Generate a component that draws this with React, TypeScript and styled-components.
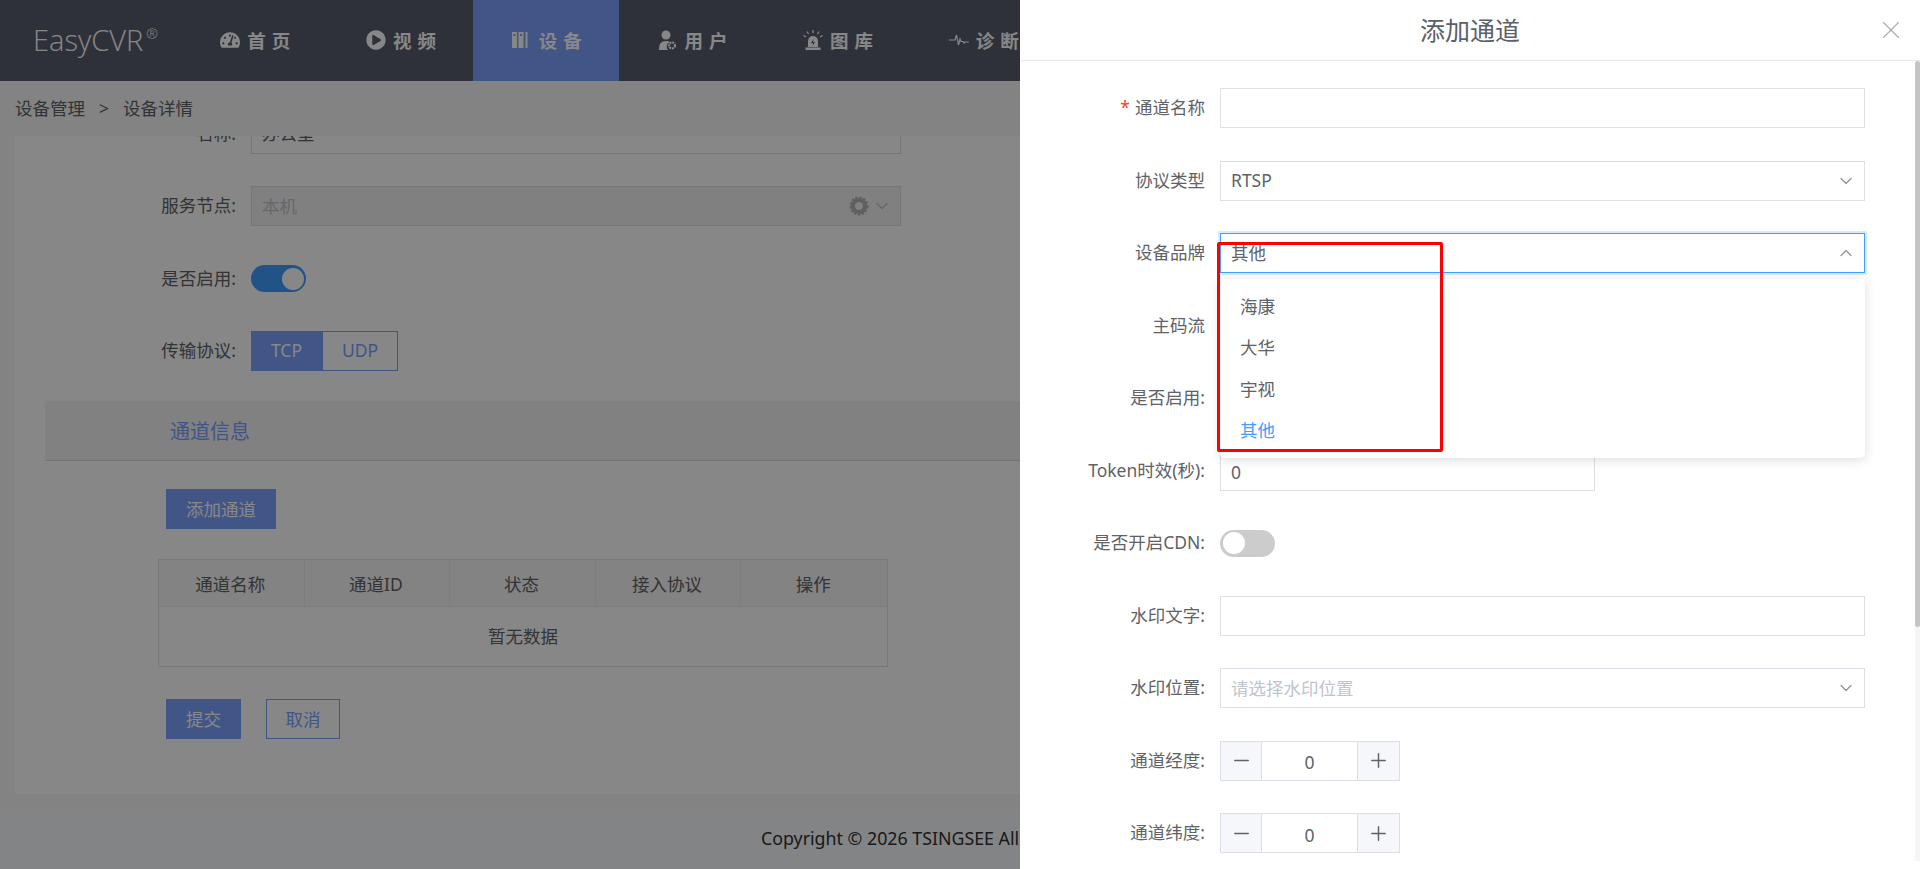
import styled, { createGlobalStyle } from "styled-components";
import { ChevronDown, ChevronUp, Minus, Plus, X } from "lucide-react";
import { FaPlayCircle, FaTachometerAlt } from "react-icons/fa";

const GlobalStyle = createGlobalStyle`
    html, body {
        margin: 0;
        height: 100%;
        overflow: hidden;
    }
    body {
        font-family: "Noto Sans", "Noto Sans CJK SC", sans-serif;
        font-size: 17.5px;
        color: #606266;
    }
    * {
        box-sizing: border-box;
    }
`;

const Page = styled.div`
    height: 869px;
    display: flex;
    flex-direction: column;
    background: #f7f7f7;
`;

const Header = styled.header`
    height: 81px;
    flex: none;
    display: flex;
    background: #595e6f;
`;

const Logo = styled.div`
    width: 182px;
    padding: 21px 0 0 33px;
    font-size: 29px;
    line-height: 38px;
    color: #fff;
    font-family: "Open Sans", sans-serif;
    font-weight: 300;
    white-space: nowrap;

    sup {
        font-size: 14px;
        line-height: 0;
        vertical-align: 12px;
        margin-left: 3px;
    }
`;

const NavItem = styled.div<{ $active?: boolean }>`
    width: 145.7px;
    flex: none;
    display: flex;
    align-items: center;
    justify-content: center;
    gap: 7px;
    padding: 0 0 2px 7px;
    color: #fff;
    background: ${(p) => (p.$active ? "#7da0ff" : "transparent")};
    font-weight: 700;
    font-size: 18.5px;
    letter-spacing: 6px;

    svg {
        flex: none;
    }
`;

const Breadcrumb = styled.div`
    height: 55px;
    flex: none;
    display: flex;
    align-items: center;
    padding: 0 0 2px 15px;
    gap: 14px;
    color: #606266;
`;

const Body = styled.main`
    flex: 1;
    min-height: 0;
    padding: 0 15px 13px;
`;

const Card = styled.div`
    height: 100%;
    background: #fff;
    overflow: hidden;
`;

// the form is scrolled a little in the reference
const Scrolled = styled.div`
    margin-top: -22.5px;
`;

const FormRow = styled.div<{ $labelWidth: number }>`
    display: flex;
    height: 40px;
    margin-bottom: 32.5px;

    > label {
        width: ${(p) => p.$labelWidth}px;
    }
`;

const Label = styled.label<{ $required?: boolean }>`
    flex: none;
    padding-right: 15px;
    text-align: right;
    line-height: 38px;
    white-space: nowrap;
    color: #606266;

    ${(p) =>
        p.$required &&
        `&::before {
            content: "*";
            color: #f5402c;
            margin-right: 5px;
        }`}
`;

const Field = styled.div<{ $width: number; $focused?: boolean; $disabled?: boolean }>`
    position: relative;
    width: ${(p) => p.$width}px;
    height: 40px;
    display: flex;
    align-items: center;
    padding: 0 12px 2px 10px;
    background: ${(p) => (p.$disabled ? "#f1f1f1" : "#fff")};
    border: 1px solid ${(p) => (p.$focused ? "#409eff" : "#dcdfe6")};
    box-shadow: ${(p) => (p.$focused ? "0 0 0 2px rgba(64, 158, 255, 0.2)" : "none")};
    color: #606266;
`;

const NumberField = styled(Field)`
    padding: 2px 12px 0 10px;
`;

const Placeholder = styled.span`
    color: #c0c4cc;
`;

const FieldIcons = styled.span<{ $muted?: boolean }>`
    display: flex;
    align-items: center;
    gap: 2px;
    margin: 2px -4px 0 auto;
    color: ${(p) => (p.$muted ? "#c0c4cc" : "#909399")};
`;

const Switch = styled.div<{ $on?: boolean }>`
    width: 55px;
    height: 27px;
    margin-top: 6.5px;
    padding: 2.5px;
    border-radius: 14px;
    display: flex;
    justify-content: ${(p) => (p.$on ? "flex-end" : "flex-start")};
    background: ${(p) => (p.$on ? "#409eff" : "#ccc")};

    &::after {
        content: "";
        width: 22px;
        height: 22px;
        border-radius: 50%;
        background: #fff;
    }
`;

const Segments = styled.div`
    display: flex;
    height: 40px;
`;

const Segment = styled.div<{ $active?: boolean }>`
    width: ${(p) => (p.$active ? "71px" : "76px")};
    display: flex;
    align-items: center;
    justify-content: center;
    padding-bottom: 2px;
    border: 1px solid #7da0ff;
    color: ${(p) => (p.$active ? "#fff" : "#7da0ff")};
    background: ${(p) => (p.$active ? "#7da0ff" : "#fff")};
`;

const SectionBar = styled.div`
    margin: -2.5px 0 0 30px;
    height: 60px;
    display: flex;
    align-items: center;
    padding-left: 125px;
    background: #f3f3f3;
    border-bottom: 1px solid #dcdcdc;
    color: #7da0ff;
    font-size: 20px;
`;

const Button = styled.div<{ $outline?: boolean; $width: number }>`
    width: ${(p) => p.$width}px;
    height: 40px;
    display: flex;
    align-items: center;
    justify-content: center;
    padding-bottom: 2px;
    border: 1px solid #7da0ff;
    color: ${(p) => (p.$outline ? "#7da0ff" : "#fff")};
    background: ${(p) => (p.$outline ? "#fff" : "#7da0ff")};
`;

const AddButton = styled(Button)`
    margin: 28px 0 30px 151px;
`;

const Table = styled.div`
    margin-left: 143px;
    width: 730px;
    height: 108px;
    border: 1px solid #e4e4e4;
`;

const TableHead = styled.div`
    height: 47px;
    display: grid;
    grid-template-columns: repeat(5, 1fr);
    background: #f7f7f7;
    border-bottom: 1px solid #ebebeb;
`;

const HeadCell = styled.div`
    display: flex;
    align-items: center;
    justify-content: center;
    padding-right: 2px;
    border-right: 1px solid #ededed;

    &:last-child {
        border-right: none;
    }
`;

const EmptyRow = styled.div`
    height: 58px;
    display: flex;
    align-items: center;
    justify-content: center;
    padding-bottom: 2px;
`;

const Actions = styled.div`
    display: flex;
    gap: 25px;
    margin: 32px 0 0 151px;
`;

const Footer = styled.footer`
    height: 62px;
    flex: none;
    display: flex;
    align-items: center;
    padding-left: 761px;
    background: #f7fafc;
    color: #303133;
    font-size: 17.8px;
    white-space: nowrap;
`;

const Mask = styled.div`
    position: fixed;
    inset: 0;
    background: rgba(0, 0, 0, 0.47);
`;

const Drawer = styled.aside`
    position: fixed;
    top: 0;
    right: 0;
    bottom: 0;
    width: 900px;
    background: #fff;
    overflow: hidden;
`;

const DrawerHeader = styled.div`
    position: relative;
    height: 61px;
    display: flex;
    align-items: center;
    justify-content: center;
    padding-bottom: 2px;
    border-bottom: 1px solid #e8e8e8;
    font-size: 25px;
    color: #5b6069;
`;

const CloseIcon = styled(X)`
    position: absolute;
    top: 15px;
    right: 14px;
    color: #a6a9ad;
`;

const DrawerBody = styled.div`
    padding-top: 27px;
`;

const Dropdown = styled.div`
    position: absolute;
    top: 279px;
    left: 200px;
    width: 645px;
    height: 179px;
    padding: 7px 0;
    background: #fff;
    border-radius: 5px;
    box-shadow: 0 2px 12px rgba(0, 0, 0, 0.14);
`;

const Option = styled.div<{ $selected?: boolean }>`
    height: 41.4px;
    line-height: 41.4px;
    padding-left: 20px;
    color: ${(p) => (p.$selected ? "#409eff" : "#606266")};
`;

const Highlight = styled.div`
    position: absolute;
    top: 242px;
    left: 197px;
    width: 226px;
    height: 210px;
    border: 3px solid #f00;
    border-radius: 2px;
    pointer-events: none;
`;

const ScrollTrack = styled.div`
    position: absolute;
    top: 61px;
    right: 0;
    width: 5px;
    height: 800px;
    background: #f6f6f6;
`;

const ScrollThumb = styled.div`
    height: 566px;
    background: #c4c4c4;
    border-radius: 3px;
`;

const Stepper = styled.div`
    width: 180px;
    height: 40px;
    display: grid;
    grid-template-columns: 40px 1fr 41px;
    border: 1px solid #dcdfe6;
`;

const StepButton = styled.div`
    display: flex;
    align-items: center;
    justify-content: center;
    background: #f5f7fa;
    color: #606266;
`;

const StepValue = styled.div`
    display: flex;
    align-items: center;
    justify-content: center;
    padding-top: 3px;
    border-left: 1px solid #dcdfe6;
    border-right: 1px solid #dcdfe6;
`;

const DeviceIcon = () => (
    <svg width="20" height="20" viewBox="0 0 20 20" fill="currentColor">
        <rect x="0" y="2" width="5" height="16" />
        <rect x="6.5" y="2" width="5" height="16" />
        <rect x="13.5" y="2" width="2" height="16" />
        <rect x="1.5" y="4" width="2" height="2" fill="#7da0ff" />
        <rect x="8" y="4" width="2" height="2" fill="#7da0ff" />
    </svg>
);

const UserGearIcon = () => (
    <svg width="20" height="20" viewBox="0 0 20 20" fill="currentColor">
        <circle cx="9" cy="5" r="4.5" />
        <path d="M2 20c0-6 2-9 7-9 1.6 0 2.8.3 3.7 1A5 5 0 0 0 11 20z" />
        <circle cx="15" cy="15.5" r="3" fill="none" stroke="currentColor" strokeWidth="2.2" strokeDasharray="2 0.8" />
    </svg>
);

const AlarmIcon = () => (
    <svg width="20" height="20" viewBox="0 0 20 20" fill="currentColor">
        <path d="M5 17v-6a5 5 0 0 1 10 0v6z" />
        <rect x="2.5" y="17.5" width="15" height="2.5" />
        <path d="M10.5 9 8 13h2l-.5 3L12 12h-2z" fill="#595e6f" />
        <path d="M10 0v3M4 1.5 5.5 4M16 1.5 14.5 4M0.5 5.5 3 7M19.5 5.5 17 7" stroke="currentColor" strokeWidth="1.3" fill="none" />
    </svg>
);

const PulseIcon = () => (
    <svg width="20" height="20" viewBox="0 0 20 20" fill="none" stroke="currentColor" strokeWidth="1.2">
        <path d="M0 10h6l1.5-5 2 10 1.5-6 1 2.5h2l1 1.5 1-1h4" />
    </svg>
);

const NAV_ITEMS = [
    { text: "首页", icon: <FaTachometerAlt size={20} /> },
    { text: "视频", icon: <FaPlayCircle size={20} /> },
    { text: "设备", icon: <DeviceIcon />, active: true },
    { text: "用户", icon: <UserGearIcon /> },
    { text: "图库", icon: <AlarmIcon /> },
    { text: "诊断", icon: <PulseIcon /> }
];

const TABLE_COLUMNS = ["通道名称", "通道ID", "状态", "接入协议", "操作"];

const BRANDS = ["海康", "大华", "宇视", "其他"];

const GearIcon = () => (
    <svg width="22" height="22" viewBox="0 0 22 22" fill="none" stroke="#b4b4b4" strokeWidth="4">
        <circle cx="11" cy="11" r="6" />
        <circle cx="11" cy="11" r="8.5" strokeWidth="2" strokeDasharray="2.5 1.5" />
    </svg>
);

const Stepped = () => (
    <Stepper>
        <StepButton>
            <Minus size={23} strokeWidth={1.5} />
        </StepButton>
        <StepValue>0</StepValue>
        <StepButton>
            <Plus size={23} strokeWidth={1.5} />
        </StepButton>
    </Stepper>
);

const App = () => {
    return (
        <>
            <GlobalStyle />
            <Page>
                <Header>
                    <Logo>
                        EasyCVR<sup>®</sup>
                    </Logo>
                    {NAV_ITEMS.map((item) => (
                        <NavItem key={item.text} $active={item.active}>
                            {item.icon}
                            <span>{item.text}</span>
                        </NavItem>
                    ))}
                </Header>
                <Breadcrumb>
                    <span>设备管理</span>
                    <span>&gt;</span>
                    <span>设备详情</span>
                </Breadcrumb>
                <Body>
                    <Card>
                        <Scrolled>
                            <FormRow $labelWidth={236}>
                                <Label $required>名称:</Label>
                                <Field $width={650}>办公室</Field>
                            </FormRow>
                            <FormRow $labelWidth={236}>
                                <Label>服务节点:</Label>
                                <Field $width={650} $disabled>
                                    <Placeholder>本机</Placeholder>
                                    <FieldIcons $muted>
                                        <GearIcon />
                                        <ChevronDown size={20} strokeWidth={1.5} />
                                    </FieldIcons>
                                </Field>
                            </FormRow>
                            <FormRow $labelWidth={236}>
                                <Label>是否启用:</Label>
                                <Switch $on />
                            </FormRow>
                            <FormRow $labelWidth={236}>
                                <Label>传输协议:</Label>
                                <Segments>
                                    <Segment $active>TCP</Segment>
                                    <Segment>UDP</Segment>
                                </Segments>
                            </FormRow>
                            <SectionBar>通道信息</SectionBar>
                            <AddButton $width={110}>添加通道</AddButton>
                            <Table>
                                <TableHead>
                                    {TABLE_COLUMNS.map((column) => (
                                        <HeadCell key={column}>{column}</HeadCell>
                                    ))}
                                </TableHead>
                                <EmptyRow>暂无数据</EmptyRow>
                            </Table>
                            <Actions>
                                <Button $width={75}>提交</Button>
                                <Button $width={74} $outline>
                                    取消
                                </Button>
                            </Actions>
                        </Scrolled>
                    </Card>
                </Body>
                <Footer>Copyright © 2026 TSINGSEE All Rights Reserved</Footer>
            </Page>
            <Mask />
            <Drawer>
                <DrawerHeader>
                    添加通道
                    <CloseIcon size={30} strokeWidth={0.9} />
                </DrawerHeader>
                <DrawerBody>
                    <FormRow $labelWidth={200}>
                        <Label $required>通道名称</Label>
                        <Field $width={645} />
                    </FormRow>
                    <FormRow $labelWidth={200}>
                        <Label>协议类型</Label>
                        <Field $width={645}>
                            RTSP
                            <FieldIcons>
                                <ChevronDown size={20} strokeWidth={1.5} />
                            </FieldIcons>
                        </Field>
                    </FormRow>
                    <FormRow $labelWidth={200}>
                        <Label>设备品牌</Label>
                        <Field $width={645} $focused>
                            其他
                            <FieldIcons>
                                <ChevronUp size={20} strokeWidth={1.5} />
                            </FieldIcons>
                        </Field>
                    </FormRow>
                    <FormRow $labelWidth={200}>
                        <Label>主码流</Label>
                        <Field $width={645} />
                    </FormRow>
                    <FormRow $labelWidth={200}>
                        <Label>是否启用:</Label>
                        <Switch />
                    </FormRow>
                    <FormRow $labelWidth={200}>
                        <Label>Token时效(秒):</Label>
                        <NumberField $width={375}>0</NumberField>
                    </FormRow>
                    <FormRow $labelWidth={200}>
                        <Label>是否开启CDN:</Label>
                        <Switch />
                    </FormRow>
                    <FormRow $labelWidth={200}>
                        <Label>水印文字:</Label>
                        <Field $width={645} />
                    </FormRow>
                    <FormRow $labelWidth={200}>
                        <Label>水印位置:</Label>
                        <Field $width={645}>
                            <Placeholder>请选择水印位置</Placeholder>
                            <FieldIcons>
                                <ChevronDown size={20} strokeWidth={1.5} />
                            </FieldIcons>
                        </Field>
                    </FormRow>
                    <FormRow $labelWidth={200}>
                        <Label>通道经度:</Label>
                        <Stepped />
                    </FormRow>
                    <FormRow $labelWidth={200}>
                        <Label>通道纬度:</Label>
                        <Stepped />
                    </FormRow>
                </DrawerBody>
                <Dropdown>
                    {BRANDS.map((brand) => (
                        <Option key={brand} $selected={brand === "其他"}>
                            {brand}
                        </Option>
                    ))}
                </Dropdown>
                <Highlight />
                <ScrollTrack>
                    <ScrollThumb />
                </ScrollTrack>
            </Drawer>
        </>
    );
};

export default App;
